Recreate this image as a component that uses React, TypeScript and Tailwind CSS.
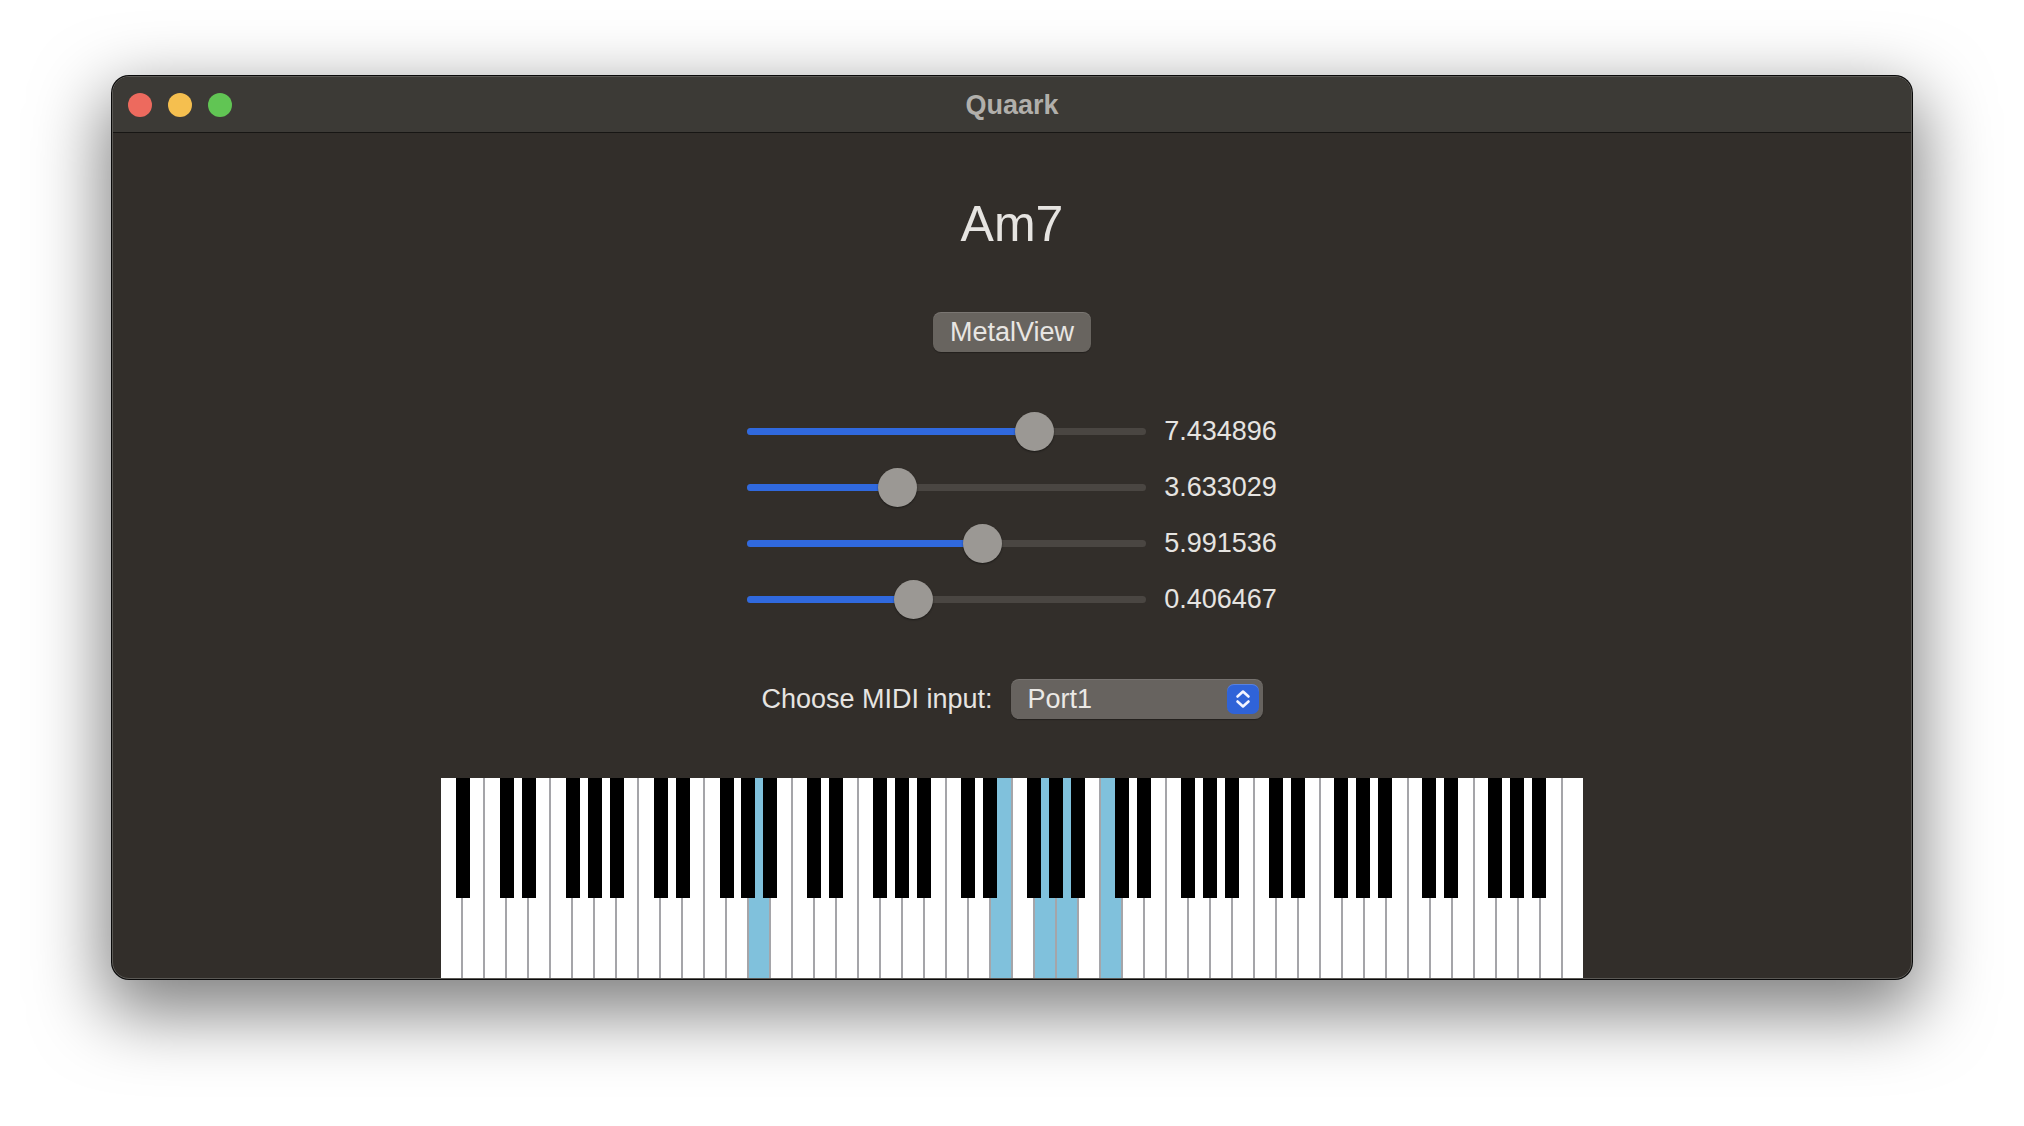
import React from "react";

const FONT = { fontFamily: '"Liberation Sans", Arial, sans-serif' };

const sliders = [
  { value: "7.434896", frac: 0.7434896 },
  { value: "3.633029", frac: 0.3633029 },
  { value: "5.991536", frac: 0.5991536 },
  { value: "0.406467", frac: 0.406467 },
];

function Slider({ frac }: { frac: number }) {
  const W = 399;
  const K = 39;
  const left = frac * (W - K);
  return (
    <div className="relative w-[399px] h-[39px] shrink-0">
      <div className="absolute left-0 right-0 top-[16px] h-[7px] rounded-full bg-[#4a4642]" />
      <div
        className="absolute left-0 top-[16px] h-[7px] rounded-full bg-[#3069de]"
        style={{ width: left + K / 2 }}
      />
      <div
        className="absolute top-0 w-[39px] h-[39px] rounded-full bg-[#9b9894] shadow-[0_1px_2px_rgba(0,0,0,0.45)]"
        style={{ left }}
      />
    </div>
  );
}

const WHITE_COUNT = 52;
const PIANO_W = 1142;
const highlighted = new Set([14, 25, 27, 28, 30]);
const LETTERS = "ABCDEFG";
const blackAfter: number[] = [];
for (let i = 0; i < WHITE_COUNT - 1; i++) {
  const l = LETTERS[i % 7];
  if (l === "A" || l === "C" || l === "D" || l === "F" || l === "G") blackAfter.push(i);
}

function Piano() {
  const w = PIANO_W / WHITE_COUNT;
  return (
    <div className="relative flex w-[1142px] h-[200px]">
      {Array.from({ length: WHITE_COUNT }).map((_, i) => (
        <div
          key={i}
          className={`flex-1 h-full ${i < WHITE_COUNT - 1 ? "border-r-2 border-[#a5a5a9]" : ""} ${
            highlighted.has(i) ? "bg-[#80c1dc]" : "bg-white"
          }`}
        />
      ))}
      {blackAfter.map((i) => (
        <div
          key={"b" + i}
          className="absolute top-0 w-[14px] h-[120px] bg-black"
          style={{ left: (i + 1) * w - 7 }}
        />
      ))}
    </div>
  );
}

export default function App() {
  return (
    <div className="w-[2024px] h-[1126px] bg-white overflow-hidden" style={FONT}>
      <div className="mx-auto mt-[76px] w-[1800px] h-[903px] rounded-[17px] overflow-hidden border border-[#5b5955] bg-[#322e2a] shadow-[0_0_0_1px_#0a0a0a,0_26px_70px_8px_rgba(0,0,0,0.5)] flex flex-col">
        {/* Title bar */}
        <div className="h-[56px] shrink-0 bg-[#3c3a36] border-b border-[#171614] grid grid-cols-[1fr_auto_1fr] items-center">
          <div className="flex items-center gap-[16px] pl-[15px]">
            <div className="w-[24px] h-[24px] rounded-full bg-[#ed6a5e]" />
            <div className="w-[24px] h-[24px] rounded-full bg-[#f5bf4f]" />
            <div className="w-[24px] h-[24px] rounded-full bg-[#61c554]" />
          </div>
          <div className="text-[27px] font-bold text-[#b1afab] leading-[56px]">Quaark</div>
          <div />
        </div>

        {/* Content */}
        <div className="flex-1 flex flex-col items-center">
          <div className="mt-[61px] text-[50px] leading-[60px] text-[#e6e4e1]">Am7</div>

          <div className="mt-[58px] w-[158px] h-[40px] rounded-[8px] bg-[#68645f] shadow-[inset_0_1px_0_rgba(255,255,255,0.12),0_1px_1px_rgba(0,0,0,0.3)] flex items-center justify-center text-[27px] leading-[40px] text-[#e8e6e3]">
            MetalView
          </div>

          <div className="mt-[51px] flex flex-col">
            {sliders.map((s, i) => (
              <div key={i} className="h-[56px] flex items-center justify-center gap-[18px]">
                <Slider frac={s.frac} />
                <span className="text-[27px] leading-[56px] text-[#e6e4e1]">{s.value}</span>
              </div>
            ))}
          </div>

          <div className="mt-[52px] h-[40px] flex items-center gap-[18px]">
            <span className="text-[27px] leading-[40px] text-[#e6e4e1]">Choose MIDI input:</span>
            <div className="w-[252px] h-[40px] rounded-[8px] bg-[#67635f] shadow-[inset_0_1px_0_rgba(255,255,255,0.1),0_1px_1px_rgba(0,0,0,0.3)] flex items-center justify-between pl-[17px] pr-[4px]">
              <span className="text-[27px] leading-[40px] text-[#ebe9e6]">Port1</span>
              <div className="w-[32px] h-[30px] rounded-[7px] bg-[#2f63d8] shadow-[inset_0_1px_0_rgba(255,255,255,0.2)] flex items-center justify-center">
                <svg width="32" height="30" viewBox="0 0 32 30" fill="none">
                  <path d="M10.5 12.5 L16 7.5 L21.5 12.5" stroke="#f2f4ff" strokeWidth="2.6" strokeLinecap="round" strokeLinejoin="round" />
                  <path d="M10.5 17.5 L16 22.5 L21.5 17.5" stroke="#f2f4ff" strokeWidth="2.6" strokeLinecap="round" strokeLinejoin="round" />
                </svg>
              </div>
            </div>
          </div>

          <div className="mt-[59px]">
            <Piano />
          </div>
        </div>
      </div>
    </div>
  );
}
